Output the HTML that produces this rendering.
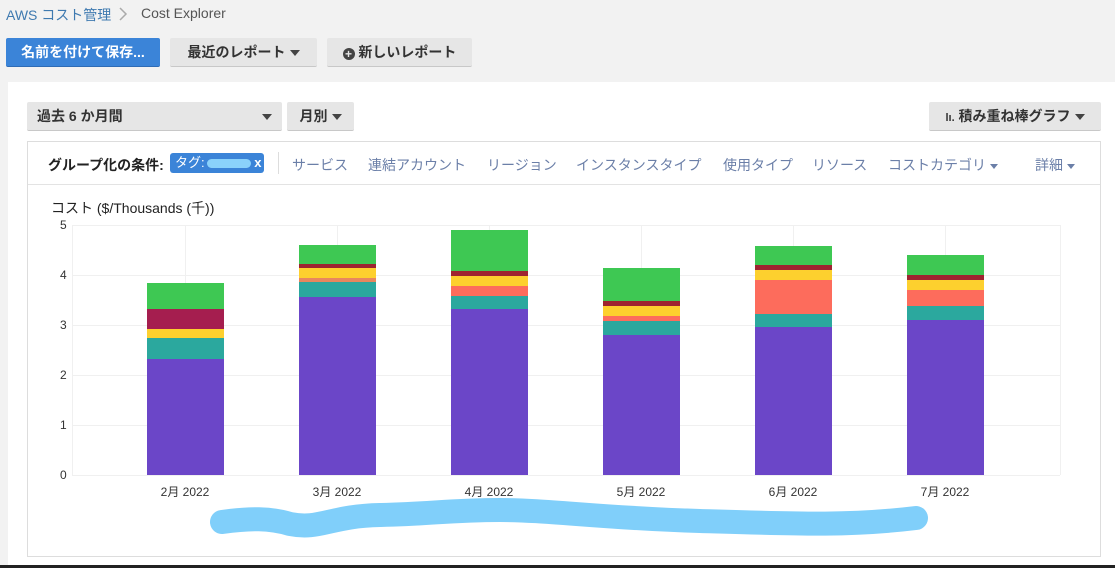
<!DOCTYPE html>
<html><head><meta charset="utf-8"><style>
*{margin:0;padding:0;box-sizing:border-box}
body{width:1115px;height:568px;background:#f2f2f2;font-family:"Liberation Sans","Noto Sans CJK JP",sans-serif;position:relative;overflow:hidden;color:#222}
.a{position:absolute}
.btn{position:absolute;top:38px;height:29px;background:#e6e6e6;border-bottom:1px solid #c8c8c8;font-size:14px;font-weight:bold;color:#333;line-height:28px;text-align:center;border-radius:2px}
.tri{display:inline-block;width:0;height:0;border-left:5px solid transparent;border-right:5px solid transparent;border-top:6px solid #444;vertical-align:middle;margin-left:4px}
.lnk{position:absolute;top:155px;font-size:14px;color:#6b7fa8}
.yl{position:absolute;left:60px;font-size:12px;color:#333}
.xl{position:absolute;top:483px;font-size:12px;color:#333;width:100px;text-align:center}
</style></head><body>
<div class="a" style="left:6px;top:5px;font-size:14px;color:#3f7ab0">AWS コスト管理</div>
<svg class="a" style="left:118px;top:6px" width="10" height="16"><path d="M2 2 L8 8 L2 14" stroke="#aaa" stroke-width="1.5" fill="none"/></svg>
<div class="a" style="left:141px;top:5px;font-size:14px;color:#555">Cost Explorer</div>
<div class="btn" style="left:6px;width:154px;background:#3b84d8;color:#fff;border-bottom-color:#2f6cb5">名前を付けて保存...</div>
<div class="btn" style="left:170px;width:147px">最近のレポート<span class="tri"></span></div>
<div class="btn" style="left:327px;width:145px"><span style="display:inline-block;width:12px;height:12px;border-radius:6px;background:#444;color:#e6e6e6;font-size:12px;line-height:12px;vertical-align:-1px">+</span> 新しいレポート</div>
<div class="a" style="left:8px;top:82px;width:1107px;height:486px;background:#fff"></div>
<div class="btn" style="left:27px;top:102px;width:255px;text-align:left;padding-left:10px">過去 6 か月間<span class="tri" style="position:absolute;right:10px;top:12px"></span></div>
<div class="btn" style="left:287px;top:102px;width:67px">月別<span class="tri"></span></div>
<div class="btn" style="left:929px;top:102px;width:172px"><span style="font-size:11px">lı.</span> 積み重ね棒グラフ<span class="tri"></span></div>
<div class="a" style="left:27px;top:141px;width:1074px;height:416px;border:1px solid #ddd"></div>
<div class="a" style="left:28px;top:184px;width:1072px;height:1px;background:#e3e3e3"></div>
<div class="a" style="left:48px;top:155px;font-size:14px;font-weight:bold;color:#222">グループ化の条件:</div>
<div class="a" style="left:170px;top:153px;width:94px;height:20px;background:#3b84d8;border-radius:3px;color:#fff;font-size:13px;line-height:20px;padding-left:5px">タグ:<span style="display:inline-block;width:44px;height:9px;background:#8ad2fb;border-radius:5px;vertical-align:middle;margin-left:2px"></span> <b>x</b></div>
<div class="a" style="left:278px;top:152px;width:1px;height:22px;background:#ddd"></div>
<div class="lnk" style="left:292px">サービス</div>
<div class="lnk" style="left:368px">連結アカウント</div>
<div class="lnk" style="left:487px">リージョン</div>
<div class="lnk" style="left:576px">インスタンスタイプ</div>
<div class="lnk" style="left:723px">使用タイプ</div>
<div class="lnk" style="left:812px">リソース</div>
<div class="lnk" style="left:888px">コストカテゴリ<span class="tri" style="border-top-color:#6b7fa8;border-width:5px 4px 0"></span></div>
<div class="lnk" style="left:1035px">詳細<span class="tri" style="border-top-color:#6b7fa8;border-width:5px 4px 0"></span></div>
<div class="a" style="left:51px;top:198px;font-size:14px;color:#222">コスト ($/Thousands (千))</div>
<div class="yl" style="top:218px">5</div><div class="yl" style="top:268px">4</div><div class="yl" style="top:318px">3</div><div class="yl" style="top:368px">2</div><div class="yl" style="top:418px">1</div><div class="yl" style="top:468px">0</div>
<svg class="a" style="left:0;top:0" width="1115" height="568">
<g stroke="#f0f0f0" stroke-width="1">
<line x1="72" y1="225.5" x2="1060" y2="225.5"/><line x1="72" y1="275.5" x2="1060" y2="275.5"/><line x1="72" y1="325.5" x2="1060" y2="325.5"/><line x1="72" y1="375.5" x2="1060" y2="375.5"/><line x1="72" y1="425.5" x2="1060" y2="425.5"/><line x1="72" y1="475.5" x2="1060" y2="475.5"/>
<line x1="185.5" y1="225" x2="185.5" y2="475"/><line x1="337.5" y1="225" x2="337.5" y2="475"/><line x1="489.5" y1="225" x2="489.5" y2="475"/><line x1="641.5" y1="225" x2="641.5" y2="475"/><line x1="793.5" y1="225" x2="793.5" y2="475"/><line x1="945.5" y1="225" x2="945.5" y2="475"/><line x1="1060.5" y1="225" x2="1060.5" y2="475"/><line x1="72.5" y1="225" x2="72.5" y2="475"/>
</g>
<g>
<rect x="147" y="283" width="77" height="26" fill="#3ec853"/><rect x="147" y="309" width="77" height="20" fill="#a51e4f"/><rect x="147" y="329" width="77" height="9" fill="#fdd02e"/><rect x="147" y="338" width="77" height="21" fill="#2ba89e"/><rect x="147" y="359" width="77" height="116" fill="#6b46c8"/>
<rect x="299" y="245" width="77" height="19" fill="#3ec853"/><rect x="299" y="264" width="77" height="4" fill="#9e2430"/><rect x="299" y="268" width="77" height="10" fill="#fdd02e"/><rect x="299" y="278" width="77" height="4" fill="#e8875e"/><rect x="299" y="282" width="77" height="15" fill="#2ba89e"/><rect x="299" y="297" width="77" height="178" fill="#6b46c8"/>
<rect x="451" y="230" width="77" height="41" fill="#3ec853"/><rect x="451" y="271" width="77" height="5" fill="#9e2430"/><rect x="451" y="276" width="77" height="10" fill="#fdd02e"/><rect x="451" y="286" width="77" height="10" fill="#fd6c5c"/><rect x="451" y="296" width="77" height="13" fill="#2ba89e"/><rect x="451" y="309" width="77" height="166" fill="#6b46c8"/>
<rect x="603" y="268" width="77" height="33" fill="#3ec853"/><rect x="603" y="301" width="77" height="5" fill="#9e2430"/><rect x="603" y="306" width="77" height="10" fill="#fdd02e"/><rect x="603" y="316" width="77" height="5" fill="#fd6c5c"/><rect x="603" y="321" width="77" height="14" fill="#2ba89e"/><rect x="603" y="335" width="77" height="140" fill="#6b46c8"/>
<rect x="755" y="246" width="77" height="19" fill="#3ec853"/><rect x="755" y="265" width="77" height="5" fill="#9e2430"/><rect x="755" y="270" width="77" height="10" fill="#fdd02e"/><rect x="755" y="280" width="77" height="34" fill="#fd6c5c"/><rect x="755" y="314" width="77" height="13" fill="#2ba89e"/><rect x="755" y="327" width="77" height="148" fill="#6b46c8"/>
<rect x="907" y="255" width="77" height="20" fill="#3ec853"/><rect x="907" y="275" width="77" height="5" fill="#9e2430"/><rect x="907" y="280" width="77" height="10" fill="#fdd02e"/><rect x="907" y="290" width="77" height="16" fill="#fd6c5c"/><rect x="907" y="306" width="77" height="14" fill="#2ba89e"/><rect x="907" y="320" width="77" height="155" fill="#6b46c8"/>
</g>
<path d="M222 522 C 250 518, 270 518, 290 524 C 320 530, 330 516, 380 515 S 450 510, 500 510 S 600 518, 700 521 S 850 526, 916 518" stroke="#80cffa" stroke-width="24" stroke-linecap="round" fill="none"/>
<rect x="0" y="565" width="1115" height="3" fill="#222"/>
</svg>
<div class="xl" style="left:135px">2月 2022</div><div class="xl" style="left:287px">3月 2022</div><div class="xl" style="left:439px">4月 2022</div><div class="xl" style="left:591px">5月 2022</div><div class="xl" style="left:743px">6月 2022</div><div class="xl" style="left:895px">7月 2022</div>
</body></html>
